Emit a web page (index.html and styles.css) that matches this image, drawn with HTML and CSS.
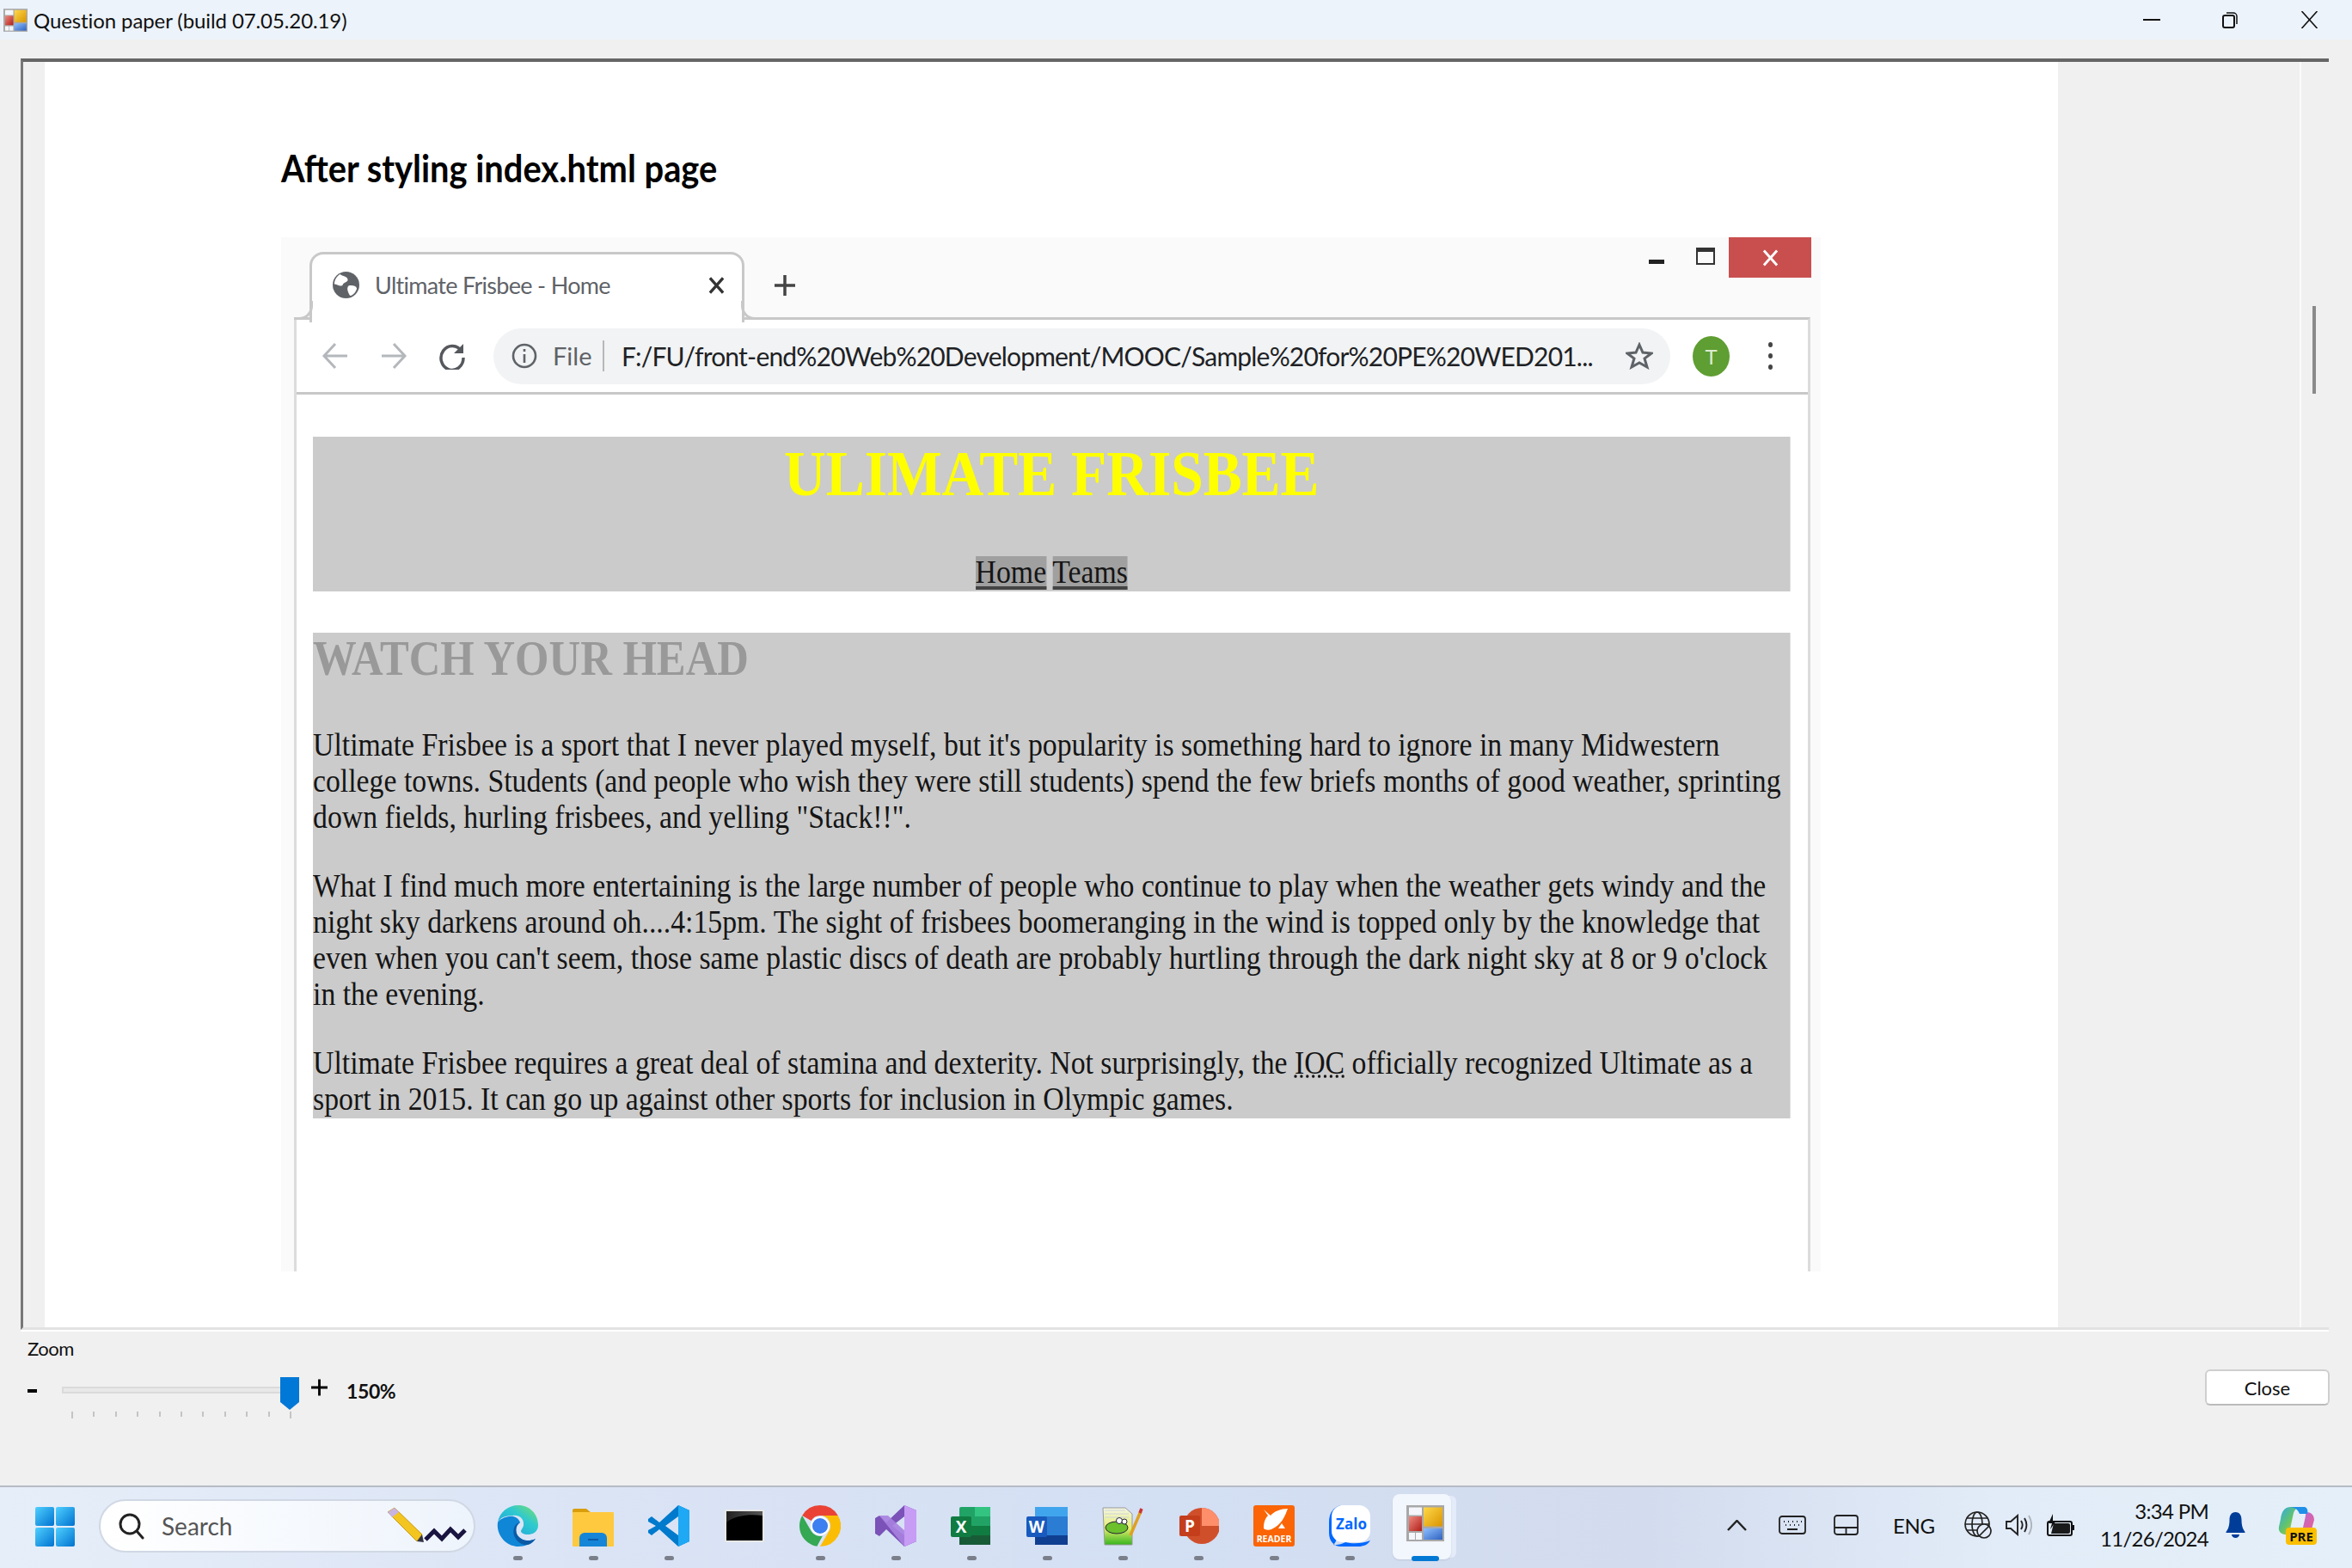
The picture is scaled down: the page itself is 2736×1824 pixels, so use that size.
FILE: index.html
```html
<!DOCTYPE html>
<html>

<head>
    <title>Question paper</title>
    <link rel="stylesheet" href="styles.css">
</head>

<body>
    <svg class="defs" width="0" height="0">
        <defs>
            <linearGradient id="winBlue" x1="0" y1="0" x2="1" y2="1">
                <stop offset="0" stop-color="#4fd0ff" />
                <stop offset="1" stop-color="#0072d0" />
            </linearGradient>
            <linearGradient id="edgeTop" x1="0" y1="1" x2="1" y2="0">
                <stop offset="0" stop-color="#1b9de2" />
                <stop offset=".6" stop-color="#2fc9cf" />
                <stop offset="1" stop-color="#7be06a" />
            </linearGradient>
            <linearGradient id="copilot" x1="0" y1="0" x2="1" y2="1">
                <stop offset="0" stop-color="#2fa8f0" />
                <stop offset=".5" stop-color="#62c46a" />
                <stop offset="1" stop-color="#f0c52e" />
            </linearGradient>
            <linearGradient id="copilotB" x1="0" y1="0" x2="1" y2="1">
                <stop offset="0" stop-color="#b06ae0" />
                <stop offset="1" stop-color="#f0608a" />
            </linearGradient>
            <linearGradient id="termShine" x1="0" y1="0" x2="1" y2="0">
                <stop offset="0" stop-color="#222" />
                <stop offset="1" stop-color="#555" />
            </linearGradient>
            <linearGradient id="npp" x1="0" y1="0" x2="0" y2="1">
                <stop offset="0" stop-color="#f6f6e4" />
                <stop offset=".55" stop-color="#e4ee70" />
                <stop offset="1" stop-color="#35b51c" />
            </linearGradient>
            <linearGradient id="yellowTile" x1="0" y1="0" x2="1" y2="1">
                <stop offset="0" stop-color="#ffd84a" />
                <stop offset="1" stop-color="#d99400" />
            </linearGradient>
            <linearGradient id="blueTile" x1="0" y1="0" x2="1" y2="1">
                <stop offset="0" stop-color="#8fbfff" />
                <stop offset="1" stop-color="#2f62c0" />
            </linearGradient>
            <linearGradient id="redTile" x1="0" y1="0" x2="1" y2="1">
                <stop offset="0" stop-color="#ef8a80" />
                <stop offset="1" stop-color="#b01e18" />
            </linearGradient>
            <symbol id="appIcon" viewBox="0 0 44 42">
                <rect width="44" height="42" fill="#a8a8a8" />
                <rect x="3" y="2.500" width="15" height="9" fill="#f4f6fb" />
                <rect x="20" y="2.500" width="22" height="22" fill="url(#yellowTile)" />
                <rect x="3" y="13" width="15" height="17" fill="url(#redTile)" />
                <rect x="20" y="27" width="22" height="13" fill="url(#blueTile)" />
                <rect x="3" y="32" width="7" height="8" fill="#f4f6fb" />
                <rect x="11" y="32" width="7" height="8" fill="#f4f6fb" />
            </symbol>
        </defs>
    </svg>

    <header class="titlebar">
        <svg class="title-icon"><use href="#appIcon" /></svg>
        <span class="title-text">Question paper (build 07.05.20.19)</span>
        <div class="win-controls">
            <svg class="win-min" viewBox="0 0 20 20"><path d="M0 10h20" stroke="#111" stroke-width="2" /></svg>
            <svg class="win-restore" viewBox="0 0 20 20" fill="none" stroke="#111" stroke-width="2"><rect x="2" y="5" width="13" height="14" rx="2" /><path d="M6 2h8a4 4 0 0 1 4 4v9" stroke-width="1.5" /></svg>
            <svg class="win-close" viewBox="0 0 20 20"><path d="M1 0l18 20M19 0L1 20" stroke="#111" stroke-width="1.6" /></svg>
        </div>
    </header>

    <main class="viewer">
        <div class="frame">
            <div class="gutter"></div>
            <div class="paper">
                <h2 class="paper-heading">After styling index.html page</h2>
                <div class="shot">
                    <div class="tabstrip">
                        <div class="tab">
                            <svg class="tab-globe" viewBox="0 0 32 32"><circle cx="16" cy="16" r="16" fill="#5f6368" /><path d="M9 3c3 3 8 2 9 6s-5 3-6 7c-2 3-7-1-10-1 0-5 3-10 7-12zM19 17c4-1 9 0 10 3-1 4-4 8-8 9-2-3-5-9-2-12z" fill="#fff" /></svg>
                            <span class="tab-title">Ultimate Frisbee - Home</span>
                            <svg class="tab-close" viewBox="0 0 20 20"><path d="M2 1l16 18M18 1L2 19" stroke="#333" stroke-width="3.5" /></svg>
                        </div>
                        <svg class="newtab" viewBox="0 0 26 26"><path d="M13 1v24M1 13h24" stroke="#444" stroke-width="3.5" /></svg>
                        <div class="shot-controls">
                            <span class="shot-min"></span>
                            <span class="shot-max"></span>
                            <span class="shot-close"><svg viewBox="0 0 20 20"><path d="M2 1l16 18M18 1L2 19" stroke="#fff" stroke-width="3" /></svg></span>
                        </div>
                    </div>
                    <div class="chrome">
                        <div class="toolbar">
                            <svg class="nav-btn" viewBox="0 0 32 32" fill="none" stroke="#b4b7bb" stroke-width="3"><path d="M30 16H3M16 2L3 16l13 14" /></svg>
                            <svg class="nav-btn" viewBox="0 0 32 32" fill="none" stroke="#b4b7bb" stroke-width="3"><path d="M2 16h27M16 2l13 14-13 14" /></svg>
                            <svg class="nav-btn" viewBox="0 0 32 32" fill="none" stroke="#55585c" stroke-width="3.5"><path d="M27 11A13 14 0 1 0 29 18" /><path d="M29 2v11H18" fill="#55585c" stroke="none" /></svg>
                            <div class="omnibox">
                                <svg class="omni-info" viewBox="0 0 32 32" fill="none" stroke="#5f6368" stroke-width="2.6"><circle cx="16" cy="16" r="13" /><path d="M16 14v10" /><path d="M16 8v3" /></svg>
                                <span class="omni-file">File</span>
                                <span class="omni-url">F:/FU/front-end%20Web%20Development/MOOC/Sample%20for%20PE%20WED201...</span>
                                <svg class="omni-star" viewBox="0 0 32 32" fill="none" stroke="#5f6368" stroke-width="3"><path d="M16 3l4 9 10 1-8 6 3 10-9-5-9 5 3-10-8-6 10-1z" /></svg>
                            </div>
                            <span class="avatar">T</span>
                            <span class="kebab"><i></i><i></i><i></i></span>
                        </div>
                        <div class="site">
                            <header class="site-head">
                                <h1>ULIMATE FRISBEE</h1>
                                <nav class="site-nav"><a>Home</a><a>Teams</a></nav>
                            </header>
                            <section class="site-body">
                                <h2>WATCH YOUR HEAD</h2>
                                <p>Ultimate Frisbee is a sport that I never played myself, but it's popularity is something hard to ignore in many Midwestern college towns. Students (and people who wish they were still students) spend the few briefs months of good weather, sprinting down fields, hurling frisbees, and yelling "Stack!!".</p>
                                <p>What I find much more entertaining is the large number of people who continue to play when the weather gets windy and the night sky darkens around oh....4:15pm. The sight of frisbees boomeranging in the wind is topped only by the knowledge that even when you can't seem, those same plastic discs of death are probably hurtling through the dark night sky at 8 or 9 o'clock in the evening.</p>
                                <p>Ultimate Frisbee requires a great deal of stamina and dexterity. Not surprisingly, the <abbr>IOC</abbr> officially recognized Ultimate as a sport in 2015. It can go up against other sports for inclusion in Olympic games.</p>
                            </section>
                        </div>
                    </div>
                </div>
            </div>
            <div class="margin-right"></div>
            <div class="scroll"><div class="thumb"></div></div>
        </div>

        <div class="zoombar">
            <div class="zoom-left">
                <div class="zoom-label">Zoom</div>
                <div class="zoom-row">
                    <span class="zoom-minus"></span>
                    <div class="slider">
                        <div class="track"></div>
                        <div class="ticks"><i></i><i></i><i></i><i></i><i></i><i></i><i></i><i></i><i></i><i></i><i></i></div>
                    </div>
                    <svg class="thumb-blue" viewBox="0 0 22 38"><path d="M0 0h22v29l-11 9-11-9z" fill="#0078d7" /></svg>
                    <svg class="zoom-plus" viewBox="0 0 20 20"><path d="M10 0v20M0 10h20" stroke="#000" stroke-width="3" /></svg>
                    <span class="zoom-value">150%</span>
                </div>
            </div>
            <button class="close-btn">Close</button>
        </div>
    </main>

    <footer class="taskbar">
        <svg class="start" viewBox="0 0 46 46">
            <rect width="22" height="22" rx="2" fill="url(#winBlue)" />
            <rect x="24" width="22" height="22" rx="2" fill="url(#winBlue)" />
            <rect y="24" width="22" height="22" rx="2" fill="url(#winBlue)" />
            <rect x="24" y="24" width="22" height="22" rx="2" fill="url(#winBlue)" />
        </svg>
        <div class="searchbox">
            <svg class="search-icon" viewBox="0 0 30 30" fill="none" stroke="#222" stroke-width="3"><circle cx="13" cy="13" r="11" /><path d="M21 21l7 8" stroke-linecap="round" /></svg>
            <span class="search-text">Search</span>
            <svg class="search-art" viewBox="0 0 94 44">
                <path d="M2 6l8-5 32 31-6 8z" fill="#f3c521" stroke="#c99a10" />
                <path d="M2 6l8-5 5 5-8 6z" fill="#c8b4e0" />
                <path d="M36 40l6-8 2 9z" fill="#334" />
                <path d="M46 38l10-10 9 9 10-11 9 9 8-8" fill="none" stroke="#1a1440" stroke-width="5" />
            </svg>
        </div>
        <div class="apps">
            <div class="app">
                <svg viewBox="0 0 48 48">
                    <path d="M1 20C3 8 13 0 25 0c13 0 23 10 23 23 0 7-5 11-12 11-5 0-8-2-8-4 0-1 1-2 2-4 1-1 1-3 1-5 0-6-6-10-12-9C10 12 4 14 1 20z" fill="url(#edgeTop)" />
                    <path d="M1 20C-1 35 11 48 25 48c8 0 15-3 20-9-8 4-17 2-21-4-3-5-2-12 3-15-2-6-8-8-13-7C8 14 4 16 1 20z" fill="#0f86d6" />
                    <path d="M27 20c-6 1-9 8-7 15 2 6 8 12 16 11 4-1 7-4 9-7-8 4-17 2-21-4-3-5-2-12 3-15z" fill="#0b5aa6" />
                </svg>
                <i class="dot"></i>
            </div>
            <div class="app">
                <svg viewBox="0 0 48 48">
                    <path d="M0 6a2 2 0 0 1 2-2h14l6 5h24v6H0z" fill="#d99e0a" />
                    <rect y="8" width="48" height="40" rx="1" fill="#ffc93f" />
                    <path d="M8 48V38a6 6 0 0 1 6-6h20a6 6 0 0 1 6 6v10z" fill="#1585d8" />
                    <path d="M18 40h12" stroke="#0b5aa6" stroke-width="2" />
                </svg>
                <i class="dot"></i>
            </div>
            <div class="app">
                <svg viewBox="0 0 48 48">
                    <path d="M35 0 13 20 4 13 0 16v3l9 5-9 5v3l4 3 9-7 22 20 13-6V6zM35 13v22L20 24z" fill="#007acc" fill-rule="evenodd" />
                    <path d="M35 0l13 6v36l-13 6z" fill="#1fa8f3" />
                </svg>
                <i class="dot"></i>
            </div>
            <div class="app">
                <svg viewBox="0 0 48 48">
                    <rect x="1" y="5" width="46" height="38" fill="#e8e8e8" />
                    <rect x="3" y="7" width="42" height="34" fill="url(#termShine)" />
                    <path d="M3 20c10-8 26-10 42-8v29H3z" fill="#000" />
                </svg>
            </div>
            <div class="app">
                <svg viewBox="0 0 48 48">
                    <path d="M24 0a24 24 0 0 1 20.8 12H24a12 12 0 0 0-10.4 6L3.2 12A24 24 0 0 1 24 0z" fill="#ea4335" />
                    <path d="M3.2 12l10.4 18a12 12 0 0 0 13.2 5.7L20.4 47.7A24 24 0 0 1 3.2 12z" fill="#34a853" />
                    <path d="M44.8 12H24a12 12 0 0 1 10.4 18L24 48a24 24 0 0 0 20.8-36z" fill="#fbbc04" />
                    <circle cx="24" cy="24" r="11" fill="#fff" />
                    <circle cx="24" cy="24" r="9" fill="#3b7ff0" />
                </svg>
                <i class="dot"></i>
            </div>
            <div class="app">
                <svg viewBox="0 0 48 48">
                    <path d="M34 0 13 20 5 12 0 15v18l5 3 8-8 21 20 14-6V6zM34 13v22L20 24z" fill="#7a52b8" fill-rule="evenodd" />
                    <path d="M5 12l29 36 14-6-33-30z" fill="#a981e0" opacity=".9" />
                    <path d="M34 0l14 6v36l-14 6z" fill="#c79cf5" />
                </svg>
                <i class="dot"></i>
            </div>
            <div class="app">
                <svg viewBox="0 0 48 48">
                    <rect x="10" y="2" width="36" height="44" rx="2" fill="#21a366" />
                    <rect x="28" y="2" width="18" height="11" fill="#33c481" />
                    <rect x="10" y="24" width="36" height="11" fill="#107c41" />
                    <rect x="10" y="35" width="36" height="11" fill="#185c37" />
                    <rect y="13" width="24" height="24" rx="2" fill="#107c41" />
                    <text class="icon-letter" x="12" y="32" text-anchor="middle">X</text>
                </svg>
                <i class="dot"></i>
            </div>
            <div class="app">
                <svg viewBox="0 0 48 48">
                    <rect x="10" y="2" width="38" height="44" rx="2" fill="#2b7cd3" />
                    <rect x="10" y="2" width="38" height="11" fill="#41a5ee" />
                    <rect x="10" y="35" width="38" height="11" fill="#103f91" />
                    <rect y="13" width="24" height="24" rx="2" fill="#185abd" />
                    <text class="icon-letter" x="12" y="32" text-anchor="middle">W</text>
                </svg>
                <i class="dot"></i>
            </div>
            <div class="app">
                <svg viewBox="0 0 48 48">
                    <path d="M1 3h26l8 7v36H3z" fill="url(#npp)" stroke="#999" />
                    <path d="M3 6h24M3 10h28M3 14h28" stroke="#cfd4d8" />
                    <ellipse cx="17" cy="26" rx="13" ry="7" fill="#6cc02c" stroke="#223" />
                    <circle cx="20" cy="18" r="3.500" fill="#fff" stroke="#223" />
                    <circle cx="26" cy="19" r="3" fill="#fff" stroke="#223" />
                    <path d="M33 35L45 7" stroke="#e0a020" stroke-width="3.500" />
                    <path d="M44 9l2-5" stroke="#c33" stroke-width="3.500" />
                </svg>
                <i class="dot"></i>
            </div>
            <div class="app">
                <svg viewBox="0 0 48 48">
                    <circle cx="28" cy="24" r="21" fill="#d04f2b" />
                    <path d="M28 3a21 21 0 0 1 21 21H28z" fill="#ff8f6b" />
                    <rect x="2" y="12" width="24" height="24" rx="2" fill="#c43e1c" />
                    <text class="icon-letter" x="14" y="31" text-anchor="middle">P</text>
                </svg>
                <i class="dot"></i>
            </div>
            <div class="app">
                <svg viewBox="0 0 48 48">
                    <rect width="48" height="48" rx="3" fill="#fb6505" />
                    <path d="M12 5l8 7c4-5 12-8 20-8-3 8-7 19-19 24-3 1-7 1-9-1 0-6 1-11 5-15zM33 21l4 6h-8z" fill="#fff" />
                    <text class="icon-reader" x="24" y="43" text-anchor="middle">READER</text>
                </svg>
                <i class="dot"></i>
            </div>
            <div class="app">
                <svg viewBox="0 0 48 48">
                    <path d="M14 0C5 2 0 9 0 20v12c0 10 6 16 14 16h20c6 0 11-2 14-7-10 4-21 4-29 2-2 1-9 4-14 3 2-2 3-4 4-7C1 30 2 14 6 6z" fill="#0068ff" />
                    <rect x="3" y="0" width="45" height="43" rx="13" fill="#fff" />
                    <text class="icon-zalo" x="26" y="28" text-anchor="middle">Zalo</text>
                </svg>
                <i class="dot"></i>
            </div>
            <div class="app app-active">
                <svg class="app-wide"><use href="#appIcon" /></svg>
                <i class="bar"></i>
            </div>
        </div>

        <div class="tray">
            <svg class="t-chevron" viewBox="0 0 23 13" fill="none" stroke="#222" stroke-width="2.4"><path d="M1 12L11.500 1 22 12" /></svg>
            <svg class="t-keyboard" viewBox="0 0 32 22" fill="none" stroke="#222" stroke-width="1.8"><rect x="1" y="1" width="30" height="20" rx="3" /><path d="M6 7h1M11 7h1M16 7h1M21 7h1M26 7h1M8 11h1M13 11h1M18 11h1M23 11h1M10 16h12" stroke-width="2" /></svg>
            <svg class="t-touchpad" viewBox="0 0 29 24" fill="none" stroke="#222" stroke-width="1.8"><rect x="1" y="1" width="27" height="22" rx="3" /><path d="M1 15h27M14.500 15v8" /></svg>
            <span class="t-lang">ENG</span>
            <svg class="t-globe" viewBox="0 0 32 32" fill="none" stroke="#222" stroke-width="1.7"><circle cx="15" cy="15" r="14" /><ellipse cx="15" cy="15" rx="6" ry="14" /><path d="M1 15h28M3 8h24M3 22h14" /><circle cx="23" cy="23" r="8" fill="#e2ebf7" /><path d="M17 29l12-12" /></svg>
            <svg class="t-speaker" viewBox="0 0 31 26" fill="none" stroke="#222" stroke-width="1.9"><path d="M1 9h5l8-7v22l-8-7H1z" /><path d="M18 8c2 3 2 7 0 10M22 5c3 5 3 11 0 16" /><path d="M27 2c4 7 4 15 0 22" stroke="#aeb4bd" /></svg>
            <svg class="t-battery" viewBox="0 0 32 26"><path d="M3 9h24a2 2 0 0 1 2 2v12a2 2 0 0 1-2 2H3a2 2 0 0 1-2-2V11a2 2 0 0 1 2-2z" fill="none" stroke="#111" stroke-width="2" /><path d="M8 11h17a2 2 0 0 1 2 2v8a2 2 0 0 1-2 2H5z" fill="#1a1a1a" /><path d="M29 13h3v6h-3z" fill="#111" /><path d="M7 0L2 11h4l-2 7 7-10H7z" fill="#111" /></svg>
            <div class="t-clock"><span>3:34 PM</span><span>11/26/2024</span></div>
            <svg class="t-bell" viewBox="0 0 25 30"><path d="M12.500 0c-5 0-7 4-7 9 0 6-1 10-4 14v1h22v-1c-3-4-4-8-4-14 0-5-2-9-7-9z" fill="#003d99" /><path d="M8 26h9a4.500 4 0 0 1-9 0z" fill="#003d99" /></svg>
            <div class="t-copilot">
                <svg viewBox="0 0 46 36">
                    <path d="M16 2c-8 0-11 6-12 14L2 25c-1 6 3 9 8 9h8c-3-2-3-6-2-11l3-14c1-3 3-6 7-7z" fill="url(#copilot)" />
                    <path d="M34 8c5 0 9 3 9 9l-3 11c-2 5-5 7-10 7h-9c5-1 8-4 9-9l2-9c1-4 1-7 2-9z" fill="url(#copilotB)" />
                    <path d="M16 2h16c3 1 4 4 3 8H26c-2-5-5-7-10-8z" fill="#1f8fe8" />
                </svg>
                <span class="t-pre">PRE</span>
            </div>
        </div>
    </footer>
</body>

</html>
```

FILE: styles.css
```css
* {
    box-sizing: border-box;
}

html,
body {
    margin: 0;
    padding: 0;
}

body {
    width: 2736px;
    height: 1824px;
    overflow: hidden;
    display: flex;
    flex-direction: column;
    background-color: #f0f0f0;
    font-family: "Open Sans", sans-serif;
    color: #111;
}

.defs {
    position: absolute;
}

/* title bar */
.titlebar {
    height: 46px;
    flex: none;
    display: flex;
    align-items: center;
    background-color: #edf3fa;
}

.title-icon {
    width: 28px;
    height: 27px;
    margin-left: 4px;
}

.title-text {
    margin-left: 7px;
    font-size: 24px;
    font-family: Lato, sans-serif;
    letter-spacing: -0.1px;
}

.win-controls {
    margin-left: auto;
    display: flex;
    align-items: center;
    padding-right: 39px;
}

.win-min {
    width: 20px;
    height: 20px;
}

.win-restore {
    width: 20px;
    height: 20px;
    margin-left: 71px;
}

.win-close {
    width: 21px;
    height: 20px;
    margin-left: 72px;
}

/* viewer */
.viewer {
    flex: 1;
    display: flex;
    flex-direction: column;
    padding-top: 22px;
    min-height: 0;
}

.frame {
    height: 1479px;
    width: 2685px;
    margin-left: 24px;
    flex: none;
    display: flex;
    border-top: 4px solid #666;
    border-left: 3px solid #777;
    border-bottom: 3px solid #e2e2e2;
    box-shadow: 0 2px 0 #fff;
}

.gutter {
    width: 25px;
    flex: none;
}

.paper {
    width: 2342px;
    flex: none;
    background-color: #fff;
    padding: 0 0 0 275px;
    overflow: hidden;
}

.margin-right {
    width: 283px;
    flex: none;
    border-right: 2px solid #fbfbfb;
}

.scroll {
    flex: 1;
    padding: 284px 0 0 13px;
}

.thumb {
    width: 4px;
    height: 102px;
    background-color: #8a8a8a;
}

.paper-heading {
    margin: 98px 0 0 0;
    font-family: Lato, sans-serif;
    font-size: 44px;
    line-height: 50px;
    font-weight: 700;
    color: #000;
    width: max-content;
    transform: scaleX(.905);
    transform-origin: 0 0;
}

/* screenshot inside the paper */
.shot {
    margin-top: 56px;
    width: 1791px;
    background-color: #fafafa;
}

.tabstrip {
    height: 96px;
    display: flex;
    align-items: flex-start;
    padding-left: 33px;
    position: relative;
    z-index: 1;
}

.tab {
    margin-top: 17px;
    width: 506px;
    height: 82px;
    background-color: #fff;
    border: 3px solid #c8c8c8;
    border-bottom: none;
    border-radius: 16px 16px 0 0;
    display: flex;
    align-items: center;
    padding: 0 20px 8px 24px;
    position: relative;
}

.tab::before,
.tab::after {
    content: "";
    position: absolute;
    bottom: 3px;
    width: 19px;
    height: 19px;
    border-bottom: 3px solid #c8c8c8;
}

.tab::before {
    left: -21px;
    border-right: 3px solid #c8c8c8;
    border-radius: 0 0 16px 0;
}

.tab::after {
    right: -21px;
    border-left: 3px solid #c8c8c8;
    border-radius: 0 0 0 16px;
}

.tab-globe {
    width: 31px;
    height: 33px;
}

.tab-title {
    margin-left: 18px;
    font-size: 27px;
    color: #5f6368;
    font-family: Lato, sans-serif;
    white-space: nowrap;
    width: 273px;
    letter-spacing: -0.7px;
}

.tab-close {
    width: 19px;
    height: 20px;
    margin-left: auto;
}

.newtab {
    width: 26px;
    height: 26px;
    margin: 43px 0 0 34px;
}

.shot-controls {
    margin-left: auto;
    display: flex;
    align-items: flex-start;
    padding-right: 11px;
}

.shot-min {
    width: 18px;
    height: 5px;
    margin-top: 26px;
    background-color: #222;
}

.shot-max {
    width: 22px;
    height: 20px;
    margin: 12px 16px 0 37px;
    border: 2px solid #333;
    border-top-width: 5px;
}

.shot-close {
    width: 96px;
    height: 47px;
    background-color: #c94f4f;
    display: flex;
    align-items: center;
    justify-content: center;
}

.shot-close svg {
    width: 19px;
    height: 20px;
}

.chrome {
    margin-left: 15px;
    width: 1764px;
    height: 1110px;
    background-color: #fff;
    border-left: 3px solid #dcdcdc;
    border-right: 3px solid #dcdcdc;
    border-top: 3px solid #c8c8c8;
    margin-top: -3px;
    overflow: hidden;
}

.toolbar {
    height: 87px;
    display: flex;
    align-items: center;
    border-bottom: 3px solid #c8c8c8;
    padding-left: 29px;
}

.nav-btn {
    width: 32px;
    height: 32px;
    margin-right: 36px;
}

.omnibox {
    margin-left: -4px;
    width: 1369px;
    height: 65px;
    background-color: #f1f3f4;
    border-radius: 33px;
    display: flex;
    align-items: center;
    padding-left: 20px;
}

.omni-info {
    width: 32px;
    height: 32px;
}

.omni-file {
    margin-left: 17px;
    padding-right: 16px;
    border-right: 2px solid #b8b8b8;
    color: #5f6368;
    font-size: 29px;
    line-height: 36px;
    font-family: Lato, sans-serif;
    width: 60px;
}

.omni-url {
    margin-left: 20px;
    width: 1132px;
    white-space: nowrap;
    font-size: 30px;
    color: #202124;
    font-family: Lato, sans-serif;
    letter-spacing: -0.8px;
}

.omni-star {
    width: 32px;
    height: 32px;
    margin-left: 36px;
}

.avatar {
    margin-left: 26px;
    width: 43px;
    height: 47px;
    border-radius: 50%;
    background-color: #5f9e32;
    color: #dcebd0;
    display: flex;
    align-items: center;
    justify-content: center;
    font-size: 24px;
    font-family: Lato, sans-serif;
}

.kebab {
    margin-left: 45px;
    display: flex;
    flex-direction: column;
    gap: 7px;
}

.kebab i {
    width: 5px;
    height: 6px;
    border-radius: 50%;
    background-color: #444;
}

/* the page shown in the screenshot */
.site {
    margin: 49px 0 0 19px;
    width: 1899px;
    transform: scaleX(.905);
    transform-origin: 0 0;
    font-family: "Liberation Serif", serif;
    font-size: 37.300px;
    line-height: 42px;
    color: #151515;
}

.site-head {
    background-color: #cbcbcb;
    text-align: center;
    height: 180px;
}

.site-head h1 {
    margin: 0;
    font-size: 74.500px;
    line-height: 86px;
    color: #ffff00;
}

.site-nav {
    margin-top: 53px;
    display: flex;
    justify-content: center;
    gap: 8px;
}

.site-nav a {
    height: 39px;
    line-height: 38px;
    background-color: #a0a0a0;
    border-bottom: 4px solid #444;
}

.site-body {
    margin-top: 48px;
    background-color: #cbcbcb;
    height: 565px;
}

.site-body h2 {
    margin: 0;
    font-size: 56px;
    line-height: 60px;
    color: #999;
}

.site-body p {
    margin: 38px 0 0 0;
}

.site-body h2 + p {
    margin-top: 50px;
}

.site-body abbr {
    text-decoration: underline dotted;
}

/* zoom panel */
.zoombar {
    flex: 1;
    display: flex;
    align-items: flex-start;
    justify-content: space-between;
    padding: 9px 26px 0 32px;
}

.zoom-label {
    font-size: 22px;
    line-height: 26px;
    font-family: Lato, sans-serif;
    letter-spacing: -0.5px;
}

.zoom-row {
    margin-top: 20px;
    display: flex;
    align-items: flex-start;
    position: relative;
}

.zoom-minus {
    width: 11px;
    height: 4px;
    margin-top: 14px;
    background-color: #000;
}

.slider {
    margin-left: 29px;
    width: 256px;
    margin-top: 11px;
}

.track {
    height: 8px;
    background-color: #e8e8e8;
    border: 2px solid #dadada;
}

.ticks {
    margin: 21px 0 0 11px;
    width: 256px;
    display: flex;
    justify-content: space-between;
}

.ticks i {
    width: 2px;
    height: 6px;
    background-color: #c4c4c4;
}

.ticks i:first-child,
.ticks i:last-child {
    height: 8px;
}

.thumb-blue {
    width: 22px;
    height: 38px;
    margin-left: -2px;
}

.zoom-plus {
    width: 19px;
    height: 20px;
    margin: 2px 0 0 14px;
}

.zoom-value {
    margin: 3px 0 0 22px;
    font-size: 23px;
    line-height: 26px;
    font-weight: 700;
    font-family: Lato, sans-serif;
    letter-spacing: -0.4px;
}

.close-btn {
    margin-top: 37px;
    width: 145px;
    height: 42px;
    background-color: #fff;
    border: 2px solid #cfcfcf;
    border-bottom-color: #bbb;
    border-radius: 6px;
    font-size: 22px;
    font-family: Lato, sans-serif;
    color: #111;
}

/* taskbar */
.taskbar {
    height: 96px;
    flex: none;
    display: flex;
    align-items: flex-start;
    border-top: 2px solid #b6bbc4;
    background: linear-gradient(90deg, #e6eef9 0%, #dbe4f5 25%, #d3dff3 50%, #d3dcee 70%, #e2ecf8 85%, #e5eff9 100%);
    padding-left: 41px;
}

.start {
    width: 46px;
    height: 46px;
    margin-top: 23px;
    flex: none;
}

.searchbox {
    margin: 14px 0 0 28px;
    width: 438px;
    height: 62px;
    flex: none;
    border-radius: 31px;
    background: linear-gradient(90deg, #fff, #eef4fc);
    border: 2px solid #d0d8e4;
    display: flex;
    align-items: center;
    padding-left: 21px;
}

.search-icon {
    width: 30px;
    height: 32px;
}

.search-text {
    margin-left: 20px;
    font-size: 28px;
    color: #555;
    font-family: Lato, sans-serif;
}

.search-art {
    width: 94px;
    height: 44px;
    margin-left: auto;
    margin-right: 8px;
}

.apps {
    margin-left: 5px;
    display: flex;
}

.app {
    width: 88px;
    height: 94px;
    padding-top: 21px;
    display: flex;
    flex-direction: column;
    align-items: center;
}

.app svg {
    width: 48px;
    height: 48px;
}

.dot {
    width: 11px;
    height: 5px;
    margin-top: 11px;
    border-radius: 3px;
    background-color: #7a7f8a;
}

.app-active {
    position: relative;
}

.app-active::before {
    content: "";
    position: absolute;
    top: 8px;
    left: 6px;
    width: 68px;
    height: 76px;
    border-radius: 8px;
    background-color: #f2f6fd;
    box-shadow: 0 1px 2px rgba(0, 0, 0, .1), 8px 0 0 -2px #e4ebf9;
}

.app-active svg.app-wide {
    width: 44px;
    height: 42px;
    position: relative;
}

.bar {
    position: relative;
    width: 32px;
    height: 6px;
    margin-top: 17px;
    border-radius: 3px;
    background-color: #0078d4;
}

.icon-letter {
    fill: #fff;
    font-size: 19px;
    font-weight: 700;
    font-family: "Open Sans", sans-serif;
}

.icon-reader {
    fill: #fff;
    font-size: 10.500px;
    font-weight: 700;
    font-family: "Open Sans", sans-serif;
}

.icon-zalo {
    fill: #0068ff;
    font-size: 17px;
    font-weight: 700;
    font-family: "Open Sans", sans-serif;
}

.tray {
    margin-left: auto;
    display: flex;
    align-items: center;
    height: 94px;
    padding-right: 41px;
    padding-bottom: 6px;
}

.t-chevron {
    width: 23px;
    height: 13px;
}

.t-keyboard {
    width: 32px;
    height: 22px;
    margin-left: 37px;
}

.t-touchpad {
    width: 29px;
    height: 24px;
    margin-left: 32px;
}

.t-lang {
    margin-left: 40px;
    width: 46px;
    font-size: 24px;
    font-family: Lato, sans-serif;
    letter-spacing: -0.3px;
}

.t-globe {
    width: 32px;
    height: 32px;
    margin-left: 37px;
}

.t-speaker {
    width: 31px;
    height: 26px;
    margin-left: 16px;
}

.t-battery {
    width: 32px;
    height: 26px;
    margin-left: 17px;
}

.t-clock {
    width: 156px;
    display: flex;
    flex-direction: column;
    align-items: flex-end;
    font-size: 24px;
    line-height: 32px;
    font-family: Lato, sans-serif;
    letter-spacing: -0.7px;
}

.t-bell {
    width: 25px;
    height: 30px;
    margin-left: 19px;
}

.t-copilot {
    width: 46px;
    height: 46px;
    margin-left: 36px;
    position: relative;
}

.t-copilot svg {
    width: 46px;
    height: 36px;
}

.t-pre {
    position: absolute;
    right: 0;
    bottom: 0;
    width: 36px;
    height: 20px;
    border-radius: 4px;
    background-color: #fbbf00;
    color: #111;
    font-size: 15px;
    line-height: 20px;
    font-weight: 700;
    text-align: center;
}
```
